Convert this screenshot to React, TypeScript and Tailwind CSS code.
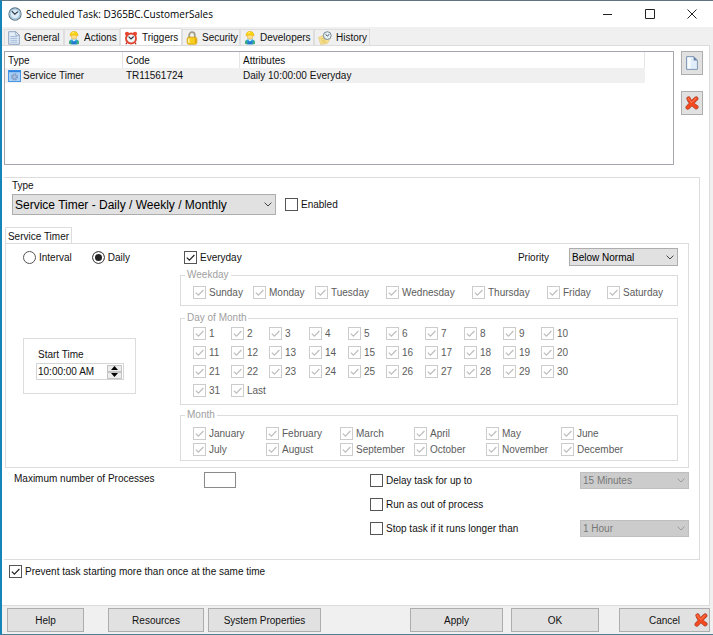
import { useState, type ReactNode } from "react";
import clsx from "clsx";

const WEEKDAYS = ["Sunday", "Monday", "Tuesday", "Wednesday", "Thursday", "Friday", "Saturday"];
const MONTHS = [
    "January", "February", "March", "April", "May", "June",
    "July", "August", "September", "October", "November", "December",
];
const MONTH_DAYS = [...Array.from({ length: 31 }, (_, i) => String(i + 1)), "Last"];

function ClockIcon() {
    return (
        <svg viewBox="0 0 14 14" className="size-3.5 shrink-0" aria-hidden="true">
            <circle cx="7" cy="7" r="6.1" fill="#dcebf5" stroke="#5d7584" strokeWidth="1.1" />
            <circle cx="7" cy="7" r="4.8" fill="none" stroke="#a3c8e2" strokeWidth="1.2" />
            <path d="M3.8 4.2 6.8 7.2 10 4.6" fill="none" stroke="#23323d" strokeWidth="1.1" />
        </svg>
    );
}

function PageIcon() {
    return (
        <svg viewBox="0 0 12 14" className="h-3.5 w-3 shrink-0" aria-hidden="true">
            <path d="M.7.7h7.1l3.5 3.5v9.1H.7z" fill="#e3eef9" stroke="#8fa3c0" />
            <path d="M7.8.7v3.5h3.5z" fill="#fff" stroke="#8197b5" strokeWidth=".8" />
            <path d="M2.4 5.5h7M2.4 7.4h7M2.4 9.3h7M2.4 11.2h7" stroke="#9db5d6" strokeWidth=".9" />
        </svg>
    );
}

function PersonIcon() {
    return (
        <svg viewBox="0 0 12 14" className="h-3.5 w-3 shrink-0" aria-hidden="true">
            <path d="M1 12.4C1 9.4 2.700 8 6 8s5 1.400 5 4.400c-1 1.300-9 1.300-10 0z" fill="#2fa6dc" />
            <path d="M3.900 8.200 6 10.400l2.100-2.200z" fill="#f4fbff" />
            <path d="M3.400 10.400h5.200v2.700H3.400z" fill="#2878d0" />
            <path d="M1 12.400c0-1.500.4-2.600 1.300-3.300l1.400 4.100c-1.300-.1-2.300-.3-2.700-.8zM11 12.400c0-1.500-.4-2.600-1.300-3.300l-1.400 4.100c1.300-.1 2.300-.3 2.700-.8z" fill="#3fae72" />
            <circle cx="6" cy="5.200" r="3" fill="#ffdf8c" stroke="#dda52a" strokeWidth=".5" />
            <path d="M2 4.600C2 1.900 3.600.500 6 .500s4 1.400 4 4.100c-2-.9-6-.9-8 0z" fill="#ffd60f" stroke="#dfae0a" strokeWidth=".6" />
            <path d="M4 2.500c.5-.7 1.100-1 1.900-1" fill="none" stroke="#fff6a8" strokeWidth=".9" />
        </svg>
    );
}

function AlarmIcon() {
    return (
        <svg viewBox="0 0 14 14" className="size-3.5 shrink-0" aria-hidden="true">
            <path d="M3 11.500 1.900 13.300M11 11.500l1.100 1.800" stroke="#a32416" strokeWidth="1.200" />
            <circle cx="3" cy="2.800" r="2.100" fill="#e8482f" />
            <circle cx="11" cy="2.800" r="2.100" fill="#e8482f" />
            <circle cx="7" cy="7.500" r="5" fill="#eef6fb" stroke="#e0442c" strokeWidth="1.900" />
            <path d="M4.600 5.700 7 8l2.700-2.500" fill="none" stroke="#29343c" strokeWidth="1.100" />
        </svg>
    );
}

function LockIcon() {
    return (
        <svg viewBox="0 0 12 14" className="h-3.5 w-3 shrink-0" aria-hidden="true">
            <path d="M3.200 7V4a2.800 2.800 0 0 1 5.600 0v3" fill="none" stroke="#a09c88" strokeWidth="1.700" />
            <rect x="1.200" y="6.200" width="9.600" height="7" rx="1.600" fill="#f9cf1e" stroke="#cf9a06" strokeWidth=".8" />
            <path d="M2.800 7.500v4.400" stroke="#fff3a6" strokeWidth="1.500" />
            <path d="M9.400 7.500v4.400" stroke="#dfa50a" strokeWidth="1.200" />
        </svg>
    );
}

function HistoryIcon() {
    return (
        <svg viewBox="0 0 14 14" className="size-3.5 shrink-0" aria-hidden="true">
            <path d="m.5 6.500 6-2.700 5 5-2.200 3.700-6.500 1z" fill="#f9e08c" stroke="#dcc477" strokeWidth=".6" />
            <path d="m3 8.200 3.400-1.400M3.600 10l4.200-1.500M4.400 11.700l3.800-1" stroke="#d5b75c" strokeWidth=".7" />
            <circle cx="9.300" cy="4.600" r="3.900" fill="#e6f0f6" stroke="#758b99" strokeWidth="1" />
            <path d="m7.500 3.300 1.800 1.700 2-1.600" fill="none" stroke="#34434d" strokeWidth=".9" />
        </svg>
    );
}

function ServiceIcon() {
    return (
        <svg viewBox="0 0 13 12" className="h-3 w-[13px] shrink-0" aria-hidden="true">
            <rect x=".5" y=".5" width="12" height="11" fill="#a8d0f6" stroke="#4a97e6" />
            <path d="M.5.500h12v1.700H.5z" fill="#2f83e0" />
            <circle cx="6.500" cy="6.900" r="2.800" fill="#cddcec" stroke="#7f9cc8" strokeWidth="1.500" strokeDasharray="1.500 .7" />
            <circle cx="6.500" cy="6.900" r="2.200" fill="#b9cbe4" stroke="#6f8fc0" strokeWidth=".7" />
            <circle cx="6.500" cy="6.900" r="1" fill="#eef6ff" stroke="#6484b8" strokeWidth=".6" />
        </svg>
    );
}

function NewIcon() {
    return (
        <svg viewBox="0 0 12 14" className="h-3.5 w-3" aria-hidden="true">
            <path d="M.6.600h7.200l3.600 3.600v9.200H.6z" fill="#e0edfa" stroke="#8195b3" />
            <path d="M1.600 1.600h3v10.800h-3z" fill="#f8fcff" />
            <path d="M7.600.4v4h4z" fill="#6e84a6" />
        </svg>
    );
}

function DeleteIcon() {
    return (
        <svg viewBox="0 0 14 14" className="size-3.5 shrink-0" aria-hidden="true">
            <g fill="none" strokeLinecap="round" strokeLinejoin="round">
                <path d="M3.600 2.600C4.400 5 7.500 8.500 11.300 11.100M11.200 2.600C8.500 5 5.500 8.500 2.700 11.500" stroke="#a8432f" strokeWidth="4.400" />
                <path d="M3.600 2.600C4.400 5 7.500 8.500 11.300 11.100M11.200 2.600C8.500 5 5.500 8.500 2.700 11.500" stroke="#f54a1f" strokeWidth="3.200" />
                <path d="M3.300 2.300c.8 1.600 1.900 3 3.500 4.300M11 2.200 7.600 5.800" stroke="#ff8a66" strokeWidth=".9" />
            </g>
        </svg>
    );
}

const TABS = [
    { name: "General", icon: <PageIcon />, width: "w-[60px]" },
    { name: "Actions", icon: <PersonIcon />, width: "w-[56px]" },
    { name: "Triggers", icon: <AlarmIcon />, width: "w-[62px]" },
    { name: "Security", icon: <LockIcon />, width: "w-[58px]" },
    { name: "Developers", icon: <PersonIcon />, width: "w-[74px]" },
    { name: "History", icon: <HistoryIcon />, width: "w-[56px]" },
];

function CheckBox({ label, checked = false, faded = false }: { label: string; checked?: boolean; faded?: boolean }) {
    return (
        <label className={clsx("flex items-center gap-[3px] whitespace-nowrap", faded && "text-[#5c5c5c]")}>
            <span className="grid shrink-0">
                <input
                    type="checkbox"
                    defaultChecked={checked}
                    className={clsx(
                        "peer col-start-1 row-start-1 size-[13px] appearance-none border bg-white",
                        faded ? "border-[#cccccc]" : "border-[#555555]"
                    )}
                />
                <svg
                    viewBox="0 0 13 13"
                    className="pointer-events-none invisible col-start-1 row-start-1 size-[13px] peer-checked:visible"
                    aria-hidden="true"
                >
                    <path d="m2.800 6.600 2.600 2.600 5-5.200" fill="none" stroke={faded ? "#bdbdbd" : "#222"} strokeWidth="1.200" />
                </svg>
            </span>
            {label}
        </label>
    );
}

function Radio({ label, checked = false }: { label: string; checked?: boolean }) {
    return (
        <label className="flex items-center gap-[3px]">
            <input
                type="radio"
                name="schedule"
                defaultChecked={checked}
                className="size-[13px] appearance-none rounded-full border border-[#555555] bg-white checked:bg-[#222222] checked:shadow-[inset_0_0_0_2px_#ffffff]"
            />
            {label}
        </label>
    );
}

function Select({ label, value, className, disabled = false }: { label: string; value: string; className: string; disabled?: boolean }) {
    return (
        <span className={clsx("grid shrink-0 items-center", className)}>
            <select
                aria-label={label}
                disabled={disabled}
                className={clsx(
                    "col-start-1 row-start-1 size-full appearance-none border pr-4 pl-0.5 opacity-100",
                    disabled ? "border-[#bfbfbf] bg-[#cccccc] text-[#787878]" : "border-[#adadad] bg-[#e1e1e1] text-black"
                )}
            >
                <option>{value}</option>
            </select>
            <svg
                viewBox="0 0 8 5"
                className={clsx(
                    "pointer-events-none col-start-1 row-start-1 mr-1 h-[5px] w-2 justify-self-end",
                    disabled ? "text-[#9a9a9a]" : "text-[#444444]"
                )}
                aria-hidden="true"
            >
                <path d="m.6.600 3.400 3.400L7.400.6" fill="none" stroke="currentColor" />
            </svg>
        </span>
    );
}

function CheckGroup({ title, items, className }: { title: string; items: string[]; className: string }) {
    return (
        <fieldset className="border border-[#dcdcdc] pl-3">
            <legend className="-ml-2 px-0.5 leading-[10px] text-[#a0a0a0]">{title}</legend>
            <div className={clsx("grid", className)}>
                {items.map((item) => (
                    <CheckBox key={item} label={item} checked faded />
                ))}
            </div>
        </fieldset>
    );
}

function PushButton({ children, className, label }: { children: ReactNode; className: string; label?: string }) {
    return (
        <button
            type="button"
            aria-label={label}
            className={clsx("flex h-6 items-center justify-center border border-[#adadad] bg-[#e1e1e1]", className)}
        >
            {children}
        </button>
    );
}

function TitleBar() {
    return (
        <header className="flex h-[26px] items-center bg-white pl-1.5">
            <ClockIcon />
            <h1 className="ml-1 flex-1 font-['Open_Sans','Noto_Sans',sans-serif] text-[10px] text-black">
                Scheduled Task: D365BC.CustomerSales
            </h1>
            <button type="button" aria-label="Minimize" className="flex w-[42px] justify-center">
                <svg viewBox="0 0 10 10" className="size-2.5"><path d="M0 5.500h9" stroke="#222" /></svg>
            </button>
            <button type="button" aria-label="Maximize" className="flex w-[42px] justify-center">
                <svg viewBox="0 0 10 10" className="size-2.5"><path d="M.5.500h9v9h-9z" fill="none" stroke="#222" /></svg>
            </button>
            <button type="button" aria-label="Close" className="flex w-[42px] justify-center">
                <svg viewBox="0 0 10 10" className="size-2.5"><path d="m.5.500 9 9m0-9-9 9" stroke="#222" /></svg>
            </button>
        </header>
    );
}

function TriggerList() {
    return (
        <div className="h-[114px] flex-1 overflow-auto border border-[#a5a7ac] bg-white pr-7">
            <table className="w-full table-fixed border-separate border-spacing-0 text-left">
                <colgroup>
                    <col className="w-[118px]" />
                    <col className="w-[117px]" />
                    <col />
                </colgroup>
                <thead>
                    <tr className="h-4">
                        {["Type", "Code", "Attributes"].map((head) => (
                            <th key={head} className="border-r border-[#e5e5e5] py-0 pr-0 pl-[3px] font-normal">{head}</th>
                        ))}
                    </tr>
                </thead>
                <tbody>
                    <tr className="h-[15px] bg-[#f0f0f0]">
                        <td className="py-0 pr-0 pl-[3px]">
                            <span className="flex items-center gap-0.5">
                                <ServiceIcon />
                                Service Timer
                            </span>
                        </td>
                        <td className="py-0 pr-0 pl-[3px]">TR11561724</td>
                        <td className="py-0 pr-0 pl-[3px]">Daily 10:00:00 Everyday</td>
                    </tr>
                </tbody>
            </table>
        </div>
    );
}

function StartTime() {
    return (
        <div className="mt-[72px] h-14 w-[113px] border border-[#dcdcdc] pt-2 pl-3">
            <label htmlFor="start-time" className="block pl-0.5 leading-4">Start Time</label>
            <div className="flex h-[17px] w-[88px] items-center border border-[#d5d5d5] pr-px">
                <input id="start-time" type="text" defaultValue="10:00:00 AM" className="min-w-0 flex-1 pl-px" />
                <div className="flex w-[15px] flex-col">
                    <button type="button" aria-label="Later" className="flex h-[7px] items-center justify-center border border-[#c4c4c4] bg-[#ededed]">
                        <svg viewBox="0 0 7 4" className="h-1 w-[7px] shrink-0"><path d="M0 4h7L3.500 0z" /></svg>
                    </button>
                    <button type="button" aria-label="Earlier" className="flex h-[7px] items-center justify-center border border-[#c4c4c4] bg-[#ededed]">
                        <svg viewBox="0 0 7 4" className="h-1 w-[7px] shrink-0"><path d="M0 0h7L3.500 4z" /></svg>
                    </button>
                </div>
            </div>
        </div>
    );
}

function ServiceTimer() {
    return (
        <section className="mt-3 mr-2.5 ml-px">
            <h2 className="-mb-px flex h-[17px] w-[67px] items-center justify-center border border-b-0 border-[#dcdcdc] bg-white">
                Service Timer
            </h2>
            <div className="flex border border-[#dcdcdc] pt-1 pr-2.5 pb-1.5">
                <div className="w-[174px] shrink-0 pl-[17px]">
                    <div className="flex h-[18px] items-center gap-5">
                        <Radio label="Interval" />
                        <Radio label="Daily" checked />
                    </div>
                    <StartTime />
                </div>
                <div className="min-w-0 flex-1">
                    <div className="mb-1 flex h-[18px] items-center pl-1">
                        <CheckBox label="Everyday" checked />
                        <span className="mr-5 ml-auto">Priority</span>
                        <Select label="Priority" value="Below Normal" className="h-[18px] w-[109px]" />
                    </div>
                    <CheckGroup
                        title="Weekday"
                        items={WEEKDAYS}
                        className="grid-cols-[60px_62px_71px_86px_75px_60px_auto] pt-1.5 pb-1.5"
                    />
                    <div className="h-[7px]" />
                    <CheckGroup
                        title="Day of Month"
                        items={MONTH_DAYS}
                        className="grid-cols-[38px_38px_40px_39px_38px_39px_39px_39px_38px_auto] gap-y-1.5 pt-1 pb-[7px]"
                    />
                    <div className="h-[5px]" />
                    <CheckGroup
                        title="Month"
                        items={MONTHS}
                        className="grid-cols-[73px_74px_74px_72px_75px_auto] gap-y-[3px] pt-[7px] pb-1"
                    />
                </div>
            </div>
        </section>
    );
}

export default function App() {
    const [tab, setTab] = useState("Triggers");

    return (
        <div className="flex min-h-screen flex-col border-t border-b border-l-2 border-t-[#5f7482] border-b-[#4d8093] border-l-[#1584b8] bg-[#f0f0f0] font-['Liberation_Sans',Arial,sans-serif] text-[10px] leading-[13px] text-[#111111]">
            <TitleBar />
            <nav className="flex h-[18px] items-end pl-0.5">
                {TABS.map(({ name, icon, width }) => (
                    <button
                        key={name}
                        type="button"
                        onClick={() => setTab(name)}
                        className={clsx(
                            "flex items-center gap-1 border border-b-0 border-[#dedede] pl-[3px]",
                            width,
                            tab === name ? "-mb-px h-[18px] bg-white" : "h-4 bg-[#f0f0f0]"
                        )}
                    >
                        {icon}
                        {name}
                    </button>
                ))}
            </nav>

            <main className="mr-[3px] flex-1 border-y border-r border-[#dcdcdc] bg-white pt-[5px] pb-4 pl-0.5">
                <div className="flex items-start gap-[7px] pr-1.5">
                    <TriggerList />
                    <div className="flex flex-col gap-4">
                        <PushButton className="w-[22px]" label="New trigger"><NewIcon /></PushButton>
                        <PushButton className="w-[22px]" label="Delete trigger"><DeleteIcon /></PushButton>
                    </div>
                </div>

                <div className="mt-3 mr-[9px] border-y border-r border-[#dcdcdc] pb-[22px]">
                    <p className="pl-2 leading-4">Type</p>
                    <div className="flex items-center gap-[9px] pl-2">
                        <Select label="Type" value="Service Timer - Daily / Weekly / Monthly" className="h-[21px] w-[264px] text-xs" />
                        <CheckBox label="Enabled" />
                    </div>

                    <ServiceTimer />

                    <div className="mt-1 mr-2.5 flex items-start justify-between pl-2.5">
                        <label className="flex items-start gap-[49px]">
                            Maximum number of Processes
                            <input type="text" className="h-4 w-8 border border-[#8a8a8a]" />
                        </label>
                        <div className="grid w-[319px] auto-rows-[17px] grid-cols-[1fr_auto] items-center gap-y-[7px]">
                            <CheckBox label="Delay task for up to" />
                            <Select label="Delay" value="15 Minutes" className="h-[17px] w-[109px]" disabled />
                            <CheckBox label="Run as out of process" />
                            <span />
                            <CheckBox label="Stop task if it runs longer than" />
                            <Select label="Run limit" value="1 Hour" className="h-[17px] w-[109px]" disabled />
                        </div>
                    </div>
                </div>

                <div className="mt-[5px] pl-[5px]">
                    <CheckBox label="Prevent task starting more than once at the same time" checked />
                </div>
            </main>

            <footer className="flex justify-between py-0.5 pr-[3px] pl-[5px]">
                <div className="flex">
                    <PushButton className="mr-6 w-[77px]">Help</PushButton>
                    <PushButton className="mr-1 w-24">Resources</PushButton>
                    <PushButton className="w-[113px]">System Properties</PushButton>
                </div>
                <div className="flex">
                    <PushButton className="mr-2 w-[93px]">Apply</PushButton>
                    <PushButton className="mr-5 w-[88px]">OK</PushButton>
                    <PushButton className="w-[91px] gap-3.5 pl-7">
                        Cancel
                        <DeleteIcon />
                    </PushButton>
                </div>
            </footer>
        </div>
    );
}
